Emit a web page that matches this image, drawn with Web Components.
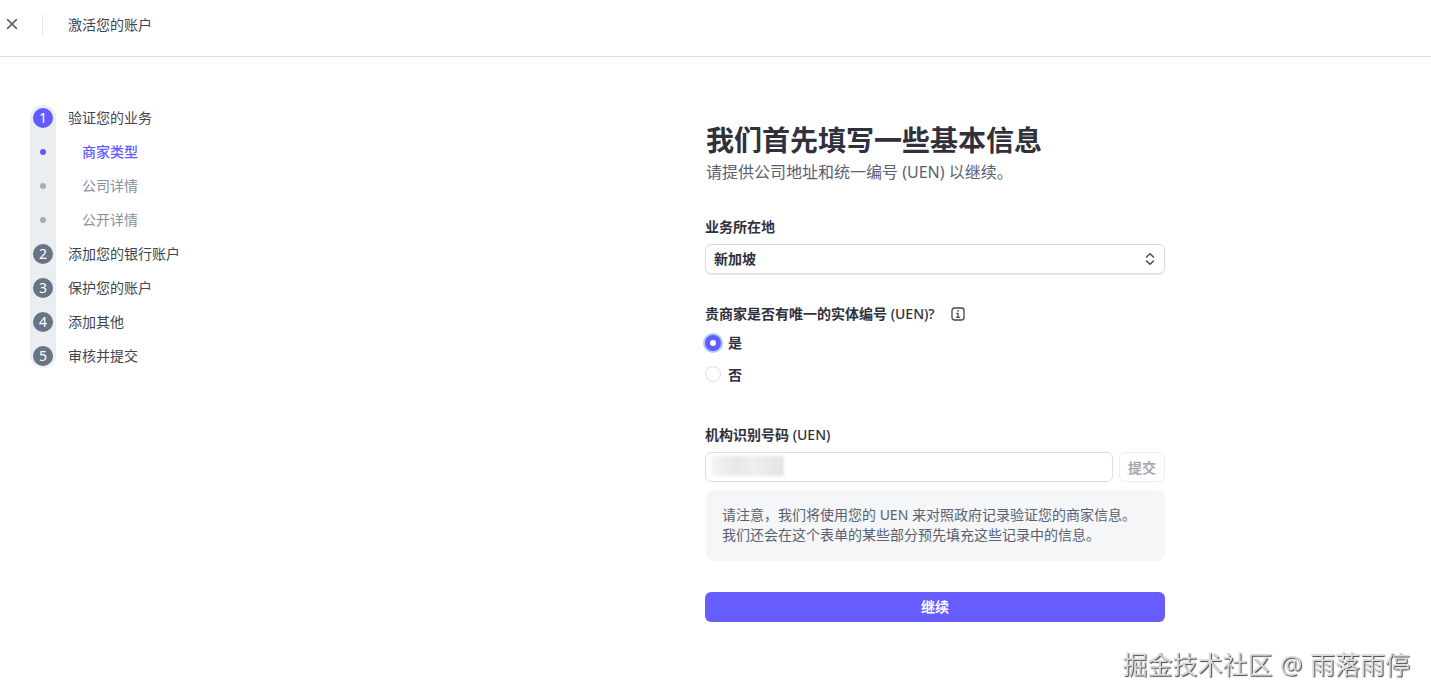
<!DOCTYPE html>
<html lang="zh">
<head>
<meta charset="utf-8">
<title>激活您的账户</title>
<style>
  html, body { margin: 0; height: 100%; background: #fff; }
  body {
    font-family: "Noto Sans", "Noto Sans CJK SC", sans-serif;
    font-size: 14px;
    color: #353a44;
    overflow: hidden;
  }
</style>
</head>
<body>
<activate-page>
  <top-bar slot="top">激活您的账户</top-bar>
  <step-rail slot="nav">
    <step-item num="1" active>验证您的业务</step-item>
    <step-item sub current>商家类型</step-item>
    <step-item sub>公司详情</step-item>
    <step-item sub>公开详情</step-item>
    <step-item num="2">添加您的银行账户</step-item>
    <step-item num="3">保护您的账户</step-item>
    <step-item num="4">添加其他</step-item>
    <step-item num="5">审核并提交</step-item>
  </step-rail>
  <basic-form slot="main"></basic-form>
</activate-page>
<water-mark>掘金技术社区 @ 雨落雨停</water-mark>

<script>
class ActivatePage extends HTMLElement {
  constructor() {
    super();
    this.attachShadow({ mode: "open" });
  }

  connectedCallback() {
    this.shadowRoot.innerHTML = `
      <style>
        :host { display: block; }
        .body { display: flex; padding-top: 44px; }
        .nav { flex: 0 0 705px; box-sizing: border-box; padding-left: 30px; }
        .main { flex: 0 0 460px; padding-top: 20px; }
      </style>
      <slot name="top"></slot>
      <div class="body">
        <div class="nav"><slot name="nav"></slot></div>
        <div class="main"><slot name="main"></slot></div>
      </div>
    `;
  }
}

class TopBar extends HTMLElement {
  constructor() {
    super();
    this.attachShadow({ mode: "open" });
  }

  connectedCallback() {
    this.shadowRoot.innerHTML = `
      <style>
        :host {
          display: flex;
          align-items: center;
          box-sizing: content-box;
          height: 50px;
          padding: 0 0 6px 6px;
          border-bottom: 1px solid #dcdee2;
          color: #414552;
          font-size: 14px;
        }
        svg { display: block; width: 12px; height: 12px; }
        .sep { width: 1px; height: 20px; background: #e3e5e8; margin: 0 25px 0 24px; }
        .close { display: flex; margin-top: -2px; }
        .title { margin-top: -3px; }
      </style>
      <span class="close">
        <svg viewBox="0 0 12 12" fill="none" stroke="#596171" stroke-width="1.6" stroke-linecap="round">
          <path d="M1.6 1.6l8.8 8.8M10.4 1.6l-8.8 8.8"/>
        </svg>
      </span>
      <span class="sep"></span>
      <span class="title"><slot></slot></span>
    `;
  }
}

class StepRail extends HTMLElement {
  constructor() {
    super();
    this.attachShadow({ mode: "open" });
  }

  connectedCallback() {
    this.shadowRoot.innerHTML = `
      <style>
        :host { display: block; position: relative; }
        .rail {
          position: absolute;
          left: 0; top: 4px; bottom: 5px;
          width: 26px;
          border-radius: 13px;
          background: #ebeef1;
        }
        .list { position: relative; display: flex; flex-direction: column; }
      </style>
      <div class="rail"></div>
      <div class="list"><slot></slot></div>
    `;
  }
}

class StepItem extends HTMLElement {
  constructor() {
    super();
    this.attachShadow({ mode: "open" });
  }

  connectedCallback() {
    const num = this.getAttribute("num");
    const sub = this.hasAttribute("sub");
    const active = this.hasAttribute("active");
    const current = this.hasAttribute("current");
    const mark = sub
      ? `<span class="dot ${current ? "on" : ""}"></span>`
      : `<span class="num ${active ? "on" : ""}">${num}</span>`;
    this.shadowRoot.innerHTML = `
      <style>
        :host { display: block; }
        .row { display: flex; align-items: center; height: 34px; }
        .mark { flex: 0 0 26px; display: flex; justify-content: center; align-items: center; }
        .num {
          width: 20px; height: 20px;
          border-radius: 50%;
          background: #687385;
          color: #fff;
          display: flex; align-items: center; justify-content: center;
          font-size: 14px;
          line-height: 20px;
        }
        .num.on { background: #635bff; }
        .dot { width: 6px; height: 6px; border-radius: 50%; background: #a3acba; }
        .dot.on { background: #635bff; }
        .label { margin-left: 12px; padding-bottom: 2px; color: #414552; white-space: nowrap; }
        .label.sub { margin-left: 26px; color: #87909f; }
        .label.current { color: #635bff; font-weight: 500; }
      </style>
      <div class="row">
        <span class="mark">${mark}</span>
        <span class="label ${sub ? "sub" : ""} ${current ? "current" : ""}"><slot></slot></span>
      </div>
    `;
  }
}

class RadioOption extends HTMLElement {
  constructor() {
    super();
    this.attachShadow({ mode: "open" });
  }

  connectedCallback() {
    const checked = this.hasAttribute("checked");
    this.shadowRoot.innerHTML = `
      <style>
        :host { display: flex; align-items: center; height: 32px; font-weight: 600; color: #30313d; }
        .ring {
          box-sizing: border-box;
          width: 16px; height: 16px;
          border-radius: 50%;
          border: 1px solid #d8dbe0;
          background: #fff;
          margin-right: 7px;
          display: flex; align-items: center; justify-content: center;
        }
        .ring.on {
          border: 0;
          margin-top: 1px;
          background: #635bff;
          box-shadow: 0 0 0 2px #a9c9fb;
        }
        .ring.on::after {
          content: "";
          width: 6px; height: 6px;
          border-radius: 50%;
          background: #fff;
        }
      </style>
      <span class="ring ${checked ? "on" : ""}"></span>
      <slot></slot>
    `;
  }
}

class NoteBox extends HTMLElement {
  constructor() {
    super();
    this.attachShadow({ mode: "open" });
  }

  connectedCallback() {
    this.shadowRoot.innerHTML = `
      <style>
        :host {
          display: block;
          box-sizing: border-box;
          height: 71px;
          margin-left: 1px;
          padding: 15px 16px;
          border-radius: 8px;
          background: #f5f6f8;
          color: #596171;
          font-size: 14px;
          line-height: 20px;
          white-space: nowrap;
        }
      </style>
      <slot></slot>
    `;
  }
}

class BasicForm extends HTMLElement {
  constructor() {
    super();
    this.attachShadow({ mode: "open" });
  }

  connectedCallback() {
    this.shadowRoot.innerHTML = `
      <style>
        :host { display: block; }
        h1 {
          margin: 0 0 0 1px;
          font-size: 28px;
          line-height: 38px;
          font-weight: 700;
          color: #30313d;
        }
        .lead { margin: 1px 0 0 1px; font-size: 16px; line-height: 24px; color: #596171; }
        .label { display: flex; align-items: center; font-weight: 600; line-height: 20px; color: #30313d; white-space: pre; }
        .label small { font-size: 14px; font-weight: 500; }
        .location { margin-top: 33px; }
        .select {
          box-sizing: border-box;
          height: 30px;
          margin-top: 7px;
          padding: 0 8px 2px;
          display: flex; align-items: center; justify-content: space-between;
          border: 1px solid #d8dbe0;
          border-radius: 6px;
          box-shadow: 0 1px 1px rgba(0,0,0,.08);
          font-weight: 600;
          color: #30313d;
        }
        .select svg { width: 12px; height: 14px; margin: 2px 0 0; }
        .question { margin-top: 30px; }
        .info { width: 14px; height: 14px; margin-left: 16px; }
        .radios { margin-top: 2px; }
        .uen { margin-top: 35px; }
        .input-row { display: flex; gap: 6px; margin-top: 7px; }
        .input {
          flex: 1;
          height: 30px;
          box-sizing: border-box;
          position: relative;
          border: 1px solid #dcdee2;
          border-radius: 6px;
          overflow: hidden;
        }
        .smudge {
          position: absolute;
          left: 6px; top: 3px;
          width: 72px; height: 20px;
          background: linear-gradient(90deg, #f3f4f4 0, #e6e7e8 35%, #efefef 55%, #e4e4e5 100%);
          filter: blur(1.5px);
        }
        .submit {
          box-sizing: border-box;
          width: 46px; height: 30px;
          display: flex; align-items: center; justify-content: center;
          border: 1px solid #ebeef1;
          border-radius: 6px;
          color: #a3a7af;
          font-weight: 600;
        }
        note-box { margin-top: 8px; }
        .go {
          box-sizing: border-box;
          height: 30px;
          margin-top: 31px;
          padding-bottom: 2px;
          display: flex; align-items: center; justify-content: center;
          border-radius: 6px;
          background: #675dff;
          color: #fff;
          font-weight: 700;
        }
      </style>
      <h1>我们首先填写一些基本信息</h1>
      <p class="lead">请提供公司地址和统一编号 (UEN) 以继续。</p>

      <div class="label location">业务所在地</div>
      <div class="select">
        新加坡
        <svg viewBox="0 0 12 14" fill="none" stroke="#414552" stroke-width="1.4" stroke-linecap="round" stroke-linejoin="round">
          <path d="M2.5 5L6 1.8 9.5 5M2.5 9L6 12.2 9.5 9"/>
        </svg>
      </div>

      <div class="label question"><span>贵商家是否有唯一的实体编号 <small>(UEN)?</small></span>
        <svg class="info" viewBox="0 0 14 14" fill="none" stroke="#414552" stroke-width="1.3">
          <rect x="1" y="1" width="12" height="12" rx="2.5"/>
          <path d="M7 6.3v4M5.6 10.3h2.8M5.8 6.3H7" stroke-linecap="round"/>
          <circle cx="7" cy="3.9" r=".8" fill="#414552" stroke="none"/>
        </svg>
      </div>
      <div class="radios">
        <radio-option checked>是</radio-option>
        <radio-option>否</radio-option>
      </div>

      <div class="label uen"><span>机构识别号码 <small>(UEN)</small></span></div>
      <div class="input-row">
        <div class="input"><div class="smudge"></div></div>
        <div class="submit">提交</div>
      </div>
      <note-box>请注意，我们将使用您的 UEN 来对照政府记录验证您的商家信息。<br>我们还会在这个表单的某些部分预先填充这些记录中的信息。</note-box>
      <div class="go">继续</div>
    `;
  }
}

class WaterMark extends HTMLElement {
  constructor() {
    super();
    this.attachShadow({ mode: "open" });
  }

  connectedCallback() {
    this.shadowRoot.innerHTML = `
      <style>
        :host {
          position: fixed;
          right: 21px;
          bottom: 19px;
          font-size: 25px;
          line-height: 32px;
          word-spacing: 1px;
          color: #d8d8d8;
          text-shadow: 1px 1px 1px #444;
          white-space: nowrap;
        }
      </style>
      <slot></slot>
    `;
  }
}

customElements.define("activate-page", ActivatePage);
customElements.define("top-bar", TopBar);
customElements.define("step-rail", StepRail);
customElements.define("step-item", StepItem);
customElements.define("radio-option", RadioOption);
customElements.define("note-box", NoteBox);
customElements.define("basic-form", BasicForm);
customElements.define("water-mark", WaterMark);
</script>
</body>
</html>
